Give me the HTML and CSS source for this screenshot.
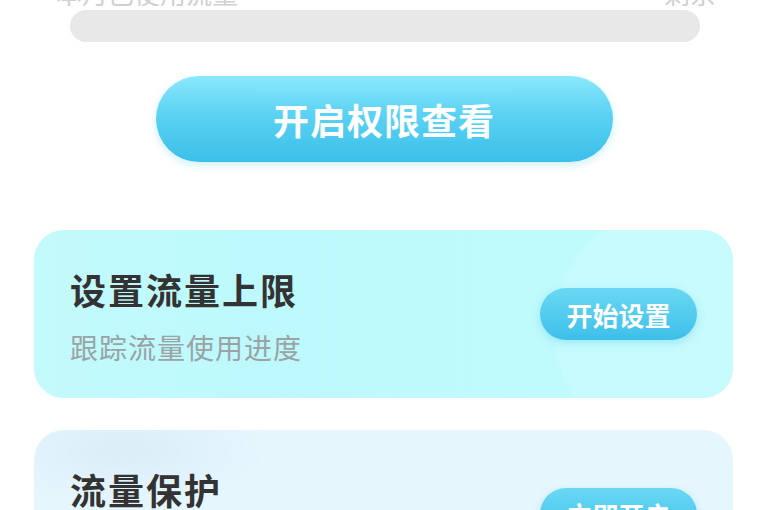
FILE: index.html
```html
<!DOCTYPE html>
<html lang="zh-CN">
<head>
<meta charset="utf-8">
<title>流量</title>
<link rel="stylesheet" href="styles.css">
</head>
<body>
<div class="page">
  <div class="top-cut">
    <span>本月已使用流量</span>
    <span>剩余</span>
  </div>
  <div class="progress"></div>
  <div class="cta">开启权限查看</div>

  <div class="card card-limit">
    <div class="card-text">
      <div class="card-title">设置流量上限</div>
      <div class="card-sub">跟踪流量使用进度</div>
    </div>
    <div class="card-btn">开始设置</div>
  </div>

  <div class="card card-protect">
    <div class="card-text">
      <div class="card-title">流量保护</div>
      <div class="card-sub">防止流量超额使用</div>
    </div>
    <div class="card-btn">立即开启</div>
  </div>
</div>
</body>
</html>
```
FILE: styles.css
```css
html, body {
  margin: 0;
  padding: 0;
  background: #ffffff;
  overflow: hidden;
}
.page {
  width: 768px;
  height: 510px;
  overflow: hidden;
  font-family: "Noto Sans CJK SC", "Noto Sans", sans-serif;
}
.top-cut {
  height: 6px;
  margin: 0 52px 0 56px;
  display: flex;
  justify-content: space-between;
  align-items: flex-end;
  overflow: hidden;
  font-size: 26px;
  line-height: 26px;
  color: #d0d0d0;
}
.top-cut span {
  display: block;
  margin-top: -22px;
}
.progress {
  margin: 4px 68px 0 70px;
  height: 32px;
  border-radius: 16px;
  background: #e8e8e8;
}
.cta {
  margin: 34px auto 0;
  width: 457px;
  height: 86px;
  border-radius: 43px;
  background: linear-gradient(180deg, #8ce8fc 0%, #5ad2f3 45%, #3bbfe9 100%);
  box-shadow: 0 3px 8px rgba(60, 190, 235, 0.25);
  color: #ffffff;
  font-size: 36px;
  font-weight: 700;
  display: flex;
  align-items: center;
  justify-content: center;
  letter-spacing: 1px;
}
.card {
  margin: 68px 35px 0 34px;
  height: 168px;
  border-radius: 30px;
  display: flex;
  align-items: center;
  justify-content: space-between;
  padding: 0 36px;
}
.card-limit {
  background:
    radial-gradient(circle at 650px 100px, rgba(205, 251, 253, 0.55) 0, rgba(205, 251, 253, 0.55) 128px, rgba(190, 250, 252, 0) 132px),
    linear-gradient(90deg, #c3fafc 0%, #bdf9fc 30%, #c0fafc 100%);
}
.card-protect {
  margin-top: 32px;
  background:
    radial-gradient(ellipse 150px 60px at 90px 20px, rgba(215, 236, 247, 0.8) 0, rgba(215, 236, 247, 0) 100%),
    #e6f6fd;
}
.card-text {
  display: flex;
  flex-direction: column;
  gap: 19px;
  margin-top: 2px;
}
.card-title {
  font-size: 36px;
  line-height: 44px;
  font-weight: 700;
  color: #333333;
  letter-spacing: 2px;
}
.card-sub {
  font-size: 28px;
  line-height: 34px;
  color: #9aa3a5;
  letter-spacing: 1px;
}
.card-btn {
  width: 157px;
  height: 52px;
  border-radius: 26px;
  background: linear-gradient(180deg, #6ad8f4 0%, #3dbfe9 100%);
  box-shadow: 0 3px 8px rgba(60, 190, 235, 0.3);
  color: #ffffff;
  font-size: 26px;
  font-weight: 700;
  display: flex;
  align-items: center;
  justify-content: center;
}
```
